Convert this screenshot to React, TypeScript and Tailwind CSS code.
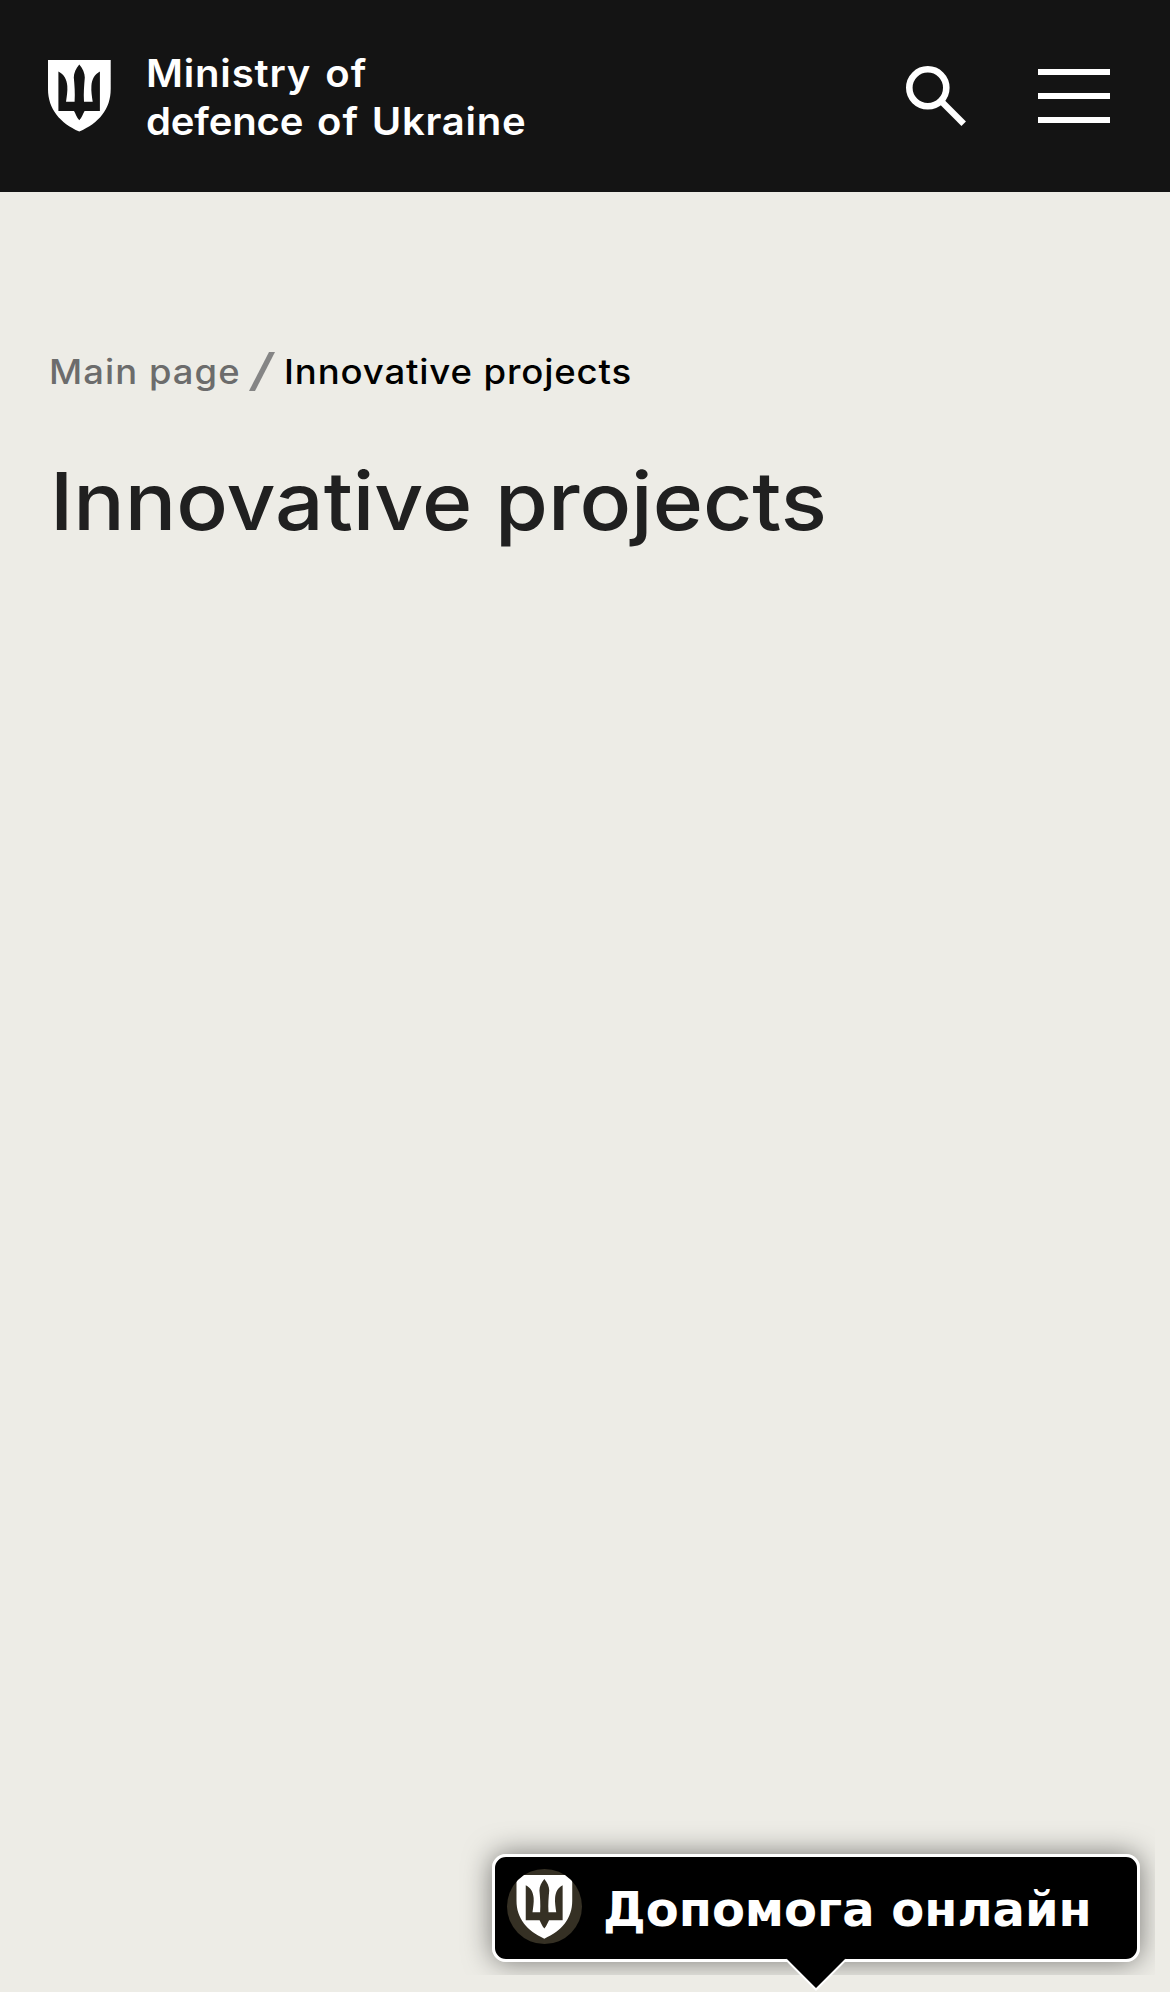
function Trident({ className }: { className: string }) {
  return (
    <svg viewBox="0 0 63 72" className={className} fillRule="evenodd">
      <path
        fill="currentColor"
        d="M0 0H62.7V29C62.7 49 51 63 31.3 71.6C12 63 0 49 0 29ZM31.3 4.5C28 8.5 25.8 13 25.8 17.5C26.5 25 27.2 33 26.6 41.8H18C18.7 37 19.7 31 19.3 26C18.8 19 16 14.5 10.4 11.5V51H26C27.5 53.5 28.6 57.5 31.3 60.2C34 57.5 35.1 53.5 36.6 51H51.9V11.5C46.6 14.5 43.8 19 43.4 26C43 31 44 37 44.7 41.8H36C35.4 33 36.2 25 36.8 17.5C36.8 13 34.6 8.5 31.3 4.5Z"
      />
    </svg>
  );
}

export default function App() {
  return (
    <div className="flex h-[1992px] w-[1170px] flex-col overflow-hidden bg-[#edece6] font-['Inter',sans-serif]">
      <header className="flex h-48 shrink-0 items-start bg-[#141414] pl-12 text-white">
        <Trident className="mt-[60px] h-[72px] w-[63px]" />
        <div className="mt-[49px] ml-[35px] w-[480px] origin-left scale-x-[1.055] text-[38px] leading-[48px] font-semibold whitespace-nowrap">
          <p className="flex">
            <span className="w-[170px] tracking-[0.75px]">Ministry</span> <span className="tracking-[1px]">of</span>
          </p>
          <p className="flex">
            <span className="w-[162px] tracking-[-0.2px]">defence</span>{" "}
            <span className="w-[52px] tracking-[1px]">of</span> <span className="tracking-[0.7px]">Ukraine</span>
          </p>
        </div>
        <button className="mt-[65px] ml-auto" aria-label="Search">
          <svg viewBox="0 0 62 62" className="size-[62px]" fill="none" stroke="currentColor">
            <circle cx="22.8" cy="22.8" r="18.5" strokeWidth="6.6" />
            <path d="M35.5 35.5L58.7 58.7" strokeWidth="6.3" />
          </svg>
        </button>
        <button className="mt-[69px] mr-[60px] ml-[71px] flex w-[72px] flex-col gap-[18px]" aria-label="Menu">
          <span className="h-1.5 w-full bg-white" />
          <span className="h-1.5 w-full bg-white" />
          <span className="h-1.5 w-full bg-white" />
        </button>
      </header>

      <main className="flex flex-1 flex-col pl-12">
        <nav className="mt-[156px] flex h-12 items-center text-[34px] leading-[48px] font-medium whitespace-nowrap">
          <span className="ml-px w-[200px] origin-left scale-x-[1.07] tracking-[1px] text-[#6c6c6c]">Main page</span>
          <svg viewBox="0 0 26 39" className="mb-0.5 h-[39px] w-[26px]">
            <path d="M0 39L20 0H26L6 39Z" fill="#858585" />
          </svg>
          <span className="ml-[9px] origin-left scale-x-[1.075] tracking-[0.8px] text-black">Innovative projects</span>
        </nav>
        <h1 className="mt-[57px] ml-0.5 origin-left scale-x-[1.07] text-[80px] leading-[96px] font-medium whitespace-nowrap text-[#202020]">
          Innovative projects
        </h1>
      </main>

      <aside className="relative mr-[30px] mb-[30px] ml-auto h-[108px] w-[648px] shrink-0">
        <div className="absolute inset-0 rounded-[14px] shadow-[0_0_28px_rgba(0,0,0,0.5)] [clip-path:inset(-40px_-15px_-13px_-40px)]" />
        <div className="relative flex h-full items-center rounded-[14px] border-[3px] border-white bg-black pl-3 text-white">
          <span className="mb-1 flex size-[75px] shrink-0 items-center justify-center overflow-hidden rounded-full bg-[#353024]">
            <Trident className="mt-px h-16 w-[57px]" />
          </span>
          <span className="mt-0.5 ml-[21px] font-['DejaVu_Sans',sans-serif] text-[48px] leading-[60px] font-bold whitespace-nowrap">
            Допомога онлайн
          </span>
          <svg viewBox="0 0 60 33" className="absolute top-[102px] left-[291px] h-[33px] w-[60px] overflow-visible">
            <path d="M0 -1H60V0L30 30L0 0Z" fill="#000" />
            <path d="M0 0.5L30 30.5L60 0.5" fill="none" stroke="#fff" strokeWidth="2" />
          </svg>
        </div>
      </aside>
    </div>
  );
}
